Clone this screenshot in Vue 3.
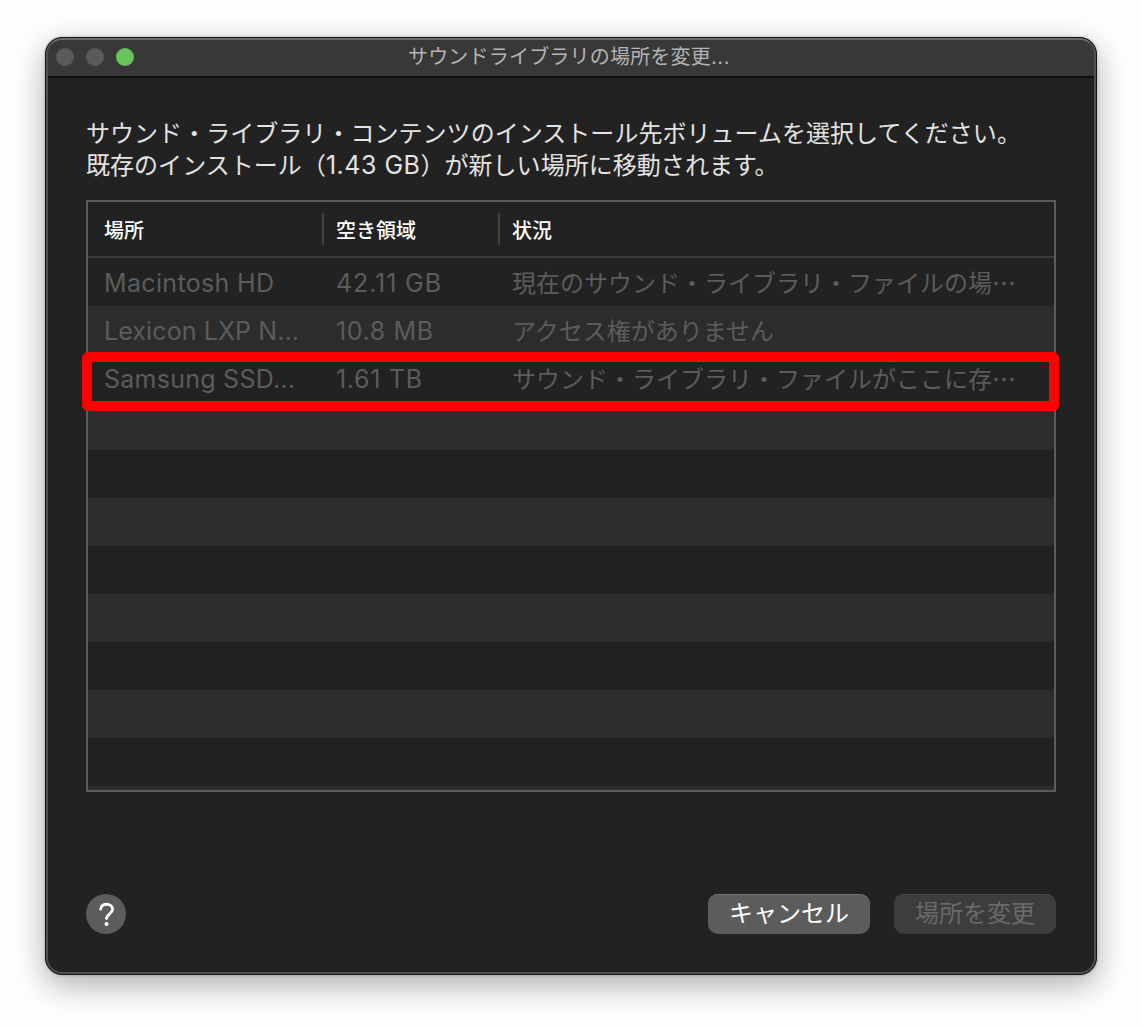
<script setup>
const rows = [
  { place: 'Macintosh HD', free: '42.11 GB', status: '現在のサウンド・ライブラリ・ファイルの場…', w: [170, 105] },
  { place: 'Lexicon LXP N...', free: '10.8 MB', status: 'アクセス権がありません', w: [195, 97] },
  { place: 'Samsung SSD...', free: '1.61 TB', status: 'サウンド・ライブラリ・ファイルがここに存…', w: [191, 86] },
]
const emptyRows = 9
</script>

<template>
  <main class="desktop">
    <section class="window">
      <header class="titlebar">
        <div class="lights"><i></i><i></i><i class="green"></i></div>
        <h1>サウンドライブラリの場所を変更<span>...</span></h1>
      </header>
      <div class="content">
        <p class="message">
          サウンド・ライブラリ・コンテンツのインストール先ボリュームを選択してください。<br />既存のインストール（<span class="latin">1.43 GB</span>）が新しい場所に移動されます。
        </p>
        <div class="table">
          <div class="thead">
            <div class="c1">場所</div>
            <div class="c2">空き領域</div>
            <div class="c3">状況</div>
          </div>
          <div class="tbody">
            <div v-for="row in rows" :key="row.place" class="row">
              <svg class="c1" height="48"><text x="16" y="34" :textLength="row.w[0]">{{ row.place }}</text></svg>
              <svg class="c2" height="48"><text x="14" y="34" :textLength="row.w[1]">{{ row.free }}</text></svg>
              <div class="c3">{{ row.status }}</div>
            </div>
            <div v-for="n in emptyRows" :key="n" class="row"></div>
          </div>
          <div class="highlight"></div>
        </div>
        <footer>
          <button class="help" aria-label="ヘルプ">
            <svg width="40" height="40" viewBox="0 0 40 40">
              <path d="M14.6 15.2C14.8 8.6 26.6 8.6 26.6 15.3C26.6 19.8 20.5 19.8 20.5 24.6" fill="none" stroke="#fff" stroke-width="2.8" stroke-linecap="round" />
              <circle cx="20.5" cy="30" r="2" fill="#fff" />
            </svg>
          </button>
          <button class="cancel">キャンセル</button>
          <button class="change" disabled>場所を変更</button>
        </footer>
      </div>
    </section>
  </main>
</template>

<style>
body { margin: 0; background: #fff; }
</style>
<style scoped>
* { box-sizing: border-box; }
.desktop {
  height: 1028px;
  padding: 37px 45px 53px;
  overflow: hidden;
  background: #fefefe;
  font-family: "Noto Sans CJK JP", sans-serif;
}
.window {
  width: 1052px;
  height: 938px;
  border: 1px solid #151515;
  border-radius: 17px;
  background: #222;
  overflow: hidden;
  position: relative;
  box-shadow: 0 0 3px rgba(0, 0, 0, .25), 0 10px 32px rgba(0, 0, 0, .32);
}
.window::after {
  content: "";
  position: absolute;
  inset: 0;
  border: 2px solid #505050;
  border-top-color: #6a6a6a;
  border-radius: 16px;
  pointer-events: none;
}
.titlebar {
  height: 40px;
  padding-bottom: 1px;
  background: #383838;
  border-bottom: 2px solid #0c0c0c;
  display: grid;
  grid-template-columns: 98px 1fr 102px;
  align-items: center;
}
.lights { display: flex; gap: 12px; padding-left: 10px; }
.lights i { width: 18px; height: 18px; border-radius: 50%; background: #5a5a5a; }
.lights .green { background: #65c558; }
h1 {
  margin: 0;
  text-align: center;
  font-size: 20px;
  line-height: 36px;
  font-weight: 400;
  color: #b4b4b4;
  white-space: nowrap;
  letter-spacing: .2px;
}
h1 span { font-family: Inter, sans-serif; letter-spacing: .6px; }
.content { padding: 38px 40px 0; }
.message {
  margin: 0;
  height: 84px;
  font-size: 24px;
  line-height: 32px;
  letter-spacing: .04px;
  color: #e3e3e3;
  white-space: nowrap;
}
.latin { font-family: Inter, sans-serif; font-size: 25px; line-height: 1; letter-spacing: .5px; }
.table {
  position: relative;
  width: 970px;
  height: 592px;
  border: 2px solid #5c5c5c;
  display: flex;
  flex-direction: column;
}
.thead {
  flex: none;
  height: 56px;
  border-bottom: 2px solid #3c3c3c;
  display: flex;
  align-items: center;
  font-size: 20px;
  line-height: 32px;
  font-weight: 500;
  color: #fff;
}
.thead > div { padding-top: 1px; height: 32px; }
.c1 { width: 234px; flex: none; }
.c2 { width: 176px; flex: none; }
.c3 { flex: 1; padding-left: 14px; }
.thead .c1 { padding-left: 16px; }
.thead .c2 { padding-left: 14px; }
.thead .c2, .thead .c3 { box-shadow: inset 2px 0 #414141; }
.tbody { flex: 1; overflow: hidden; }
.row {
  height: 48px;
  display: flex;
  font-size: 24px;
  line-height: 48px;
  color: #5c5c5c;
  white-space: nowrap;
}
.row:nth-child(even) { background: #2c2c2c; }
.row text { font-family: Inter, sans-serif; font-size: 25px; fill: #5c5c5c; }
.highlight {
  position: absolute;
  left: -6px;
  top: 150px;
  width: 977px;
  height: 59px;
  border: 10px solid #f00;
  border-radius: 6px;
}
footer { display: flex; align-items: center; padding-top: 102px; }
button { border: 0; padding: 0; height: 40px; font: inherit; font-size: 24px; line-height: 36px; }
.help { width: 40px; border-radius: 50%; background: #5c5c5c; margin-right: auto; }
.help svg { display: block; }
.cancel, .change { width: 162px; border-radius: 10px; padding-bottom: 5px; color: #fff; background: #5c5c5c; box-shadow: inset 0 1px #747474; }
.change { margin-left: 24px; color: #6a6a6a; background: #3d3d3d; box-shadow: inset 0 1px #484848; }
</style>
